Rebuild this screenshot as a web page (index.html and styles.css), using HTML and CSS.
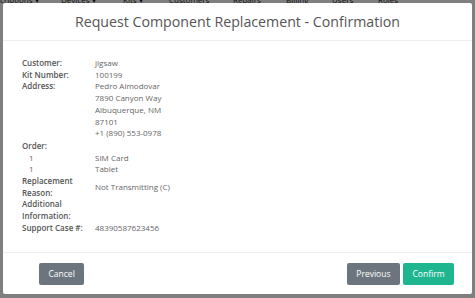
FILE: index.html
```html
<!DOCTYPE html>
<html lang="en">
<head>
    <meta charset="UTF-8">
    <meta name="viewport" content="width=device-width, initial-scale=1.0">
    <title>Request Component Replacement</title>
    <link rel="stylesheet" href="styles.css">
</head>
<body>
    <nav class="topnav">
        <span class="nav-item first">Descriptions &#9662;</span>
        <span class="nav-item">Devices &#9662;</span>
        <span class="nav-item">Kits &#9662;</span>
        <span class="nav-item">Customers</span>
        <span class="nav-item">Repairs</span>
        <span class="nav-item">Billing</span>
        <span class="nav-item">Users</span>
        <span class="nav-item">Roles</span>
    </nav>
    <div class="backdrop"></div>
    <div class="modal">
        <header class="modal-header">
            <h1>Request Component Replacement - Confirmation</h1>
        </header>
        <section class="modal-body">
            <div class="details">
                <div class="label">Customer:</div>
                <div class="value">jigsaw</div>

                <div class="label">Kit Number:</div>
                <div class="value">100199</div>

                <div class="label top">Address:</div>
                <div class="value">
                    Pedro Almodovar<br>
                    7890 Canyon Way<br>
                    Albuquerque, NM<br>
                    87101<br>
                    +1 (890) 553-0978
                </div>

                <div class="label full">Order:</div>

                <div class="qty">1</div>
                <div class="value">SIM Card</div>
                <div class="qty">1</div>
                <div class="value">Tablet</div>

                <div class="label">Replacement Reason:</div>
                <div class="value">Not Transmitting (C)</div>

                <div class="label">Additional Information:</div>
                <div class="value"></div>

                <div class="label">Support Case #:</div>
                <div class="value">48390587623456</div>
            </div>
        </section>
        <footer class="modal-footer">
            <button class="btn btn-secondary">Cancel</button>
            <div class="right-buttons">
                <button class="btn btn-secondary">Previous</button>
                <button class="btn btn-success">Confirm</button>
            </div>
        </footer>
    </div>
</body>
</html>
```

FILE: styles.css
```css
body {
    margin: 0;
    padding: 0;
    font-family: "Open Sans", sans-serif;
    background-color: #fff;
    height: 298px;
    overflow: hidden;
}

.topnav {
    display: flex;
    margin-top: -6px;
    margin-left: -14px;
    font-size: 8px;
    color: #222;
    height: 12px;
    line-height: 12px;
}

.nav-item {
    white-space: nowrap;
    width: 50px;
}

.nav-item.first {
    width: 75px;
}

.nav-item:nth-child(2) {
    width: 62px;
}

.nav-item:nth-child(3) {
    width: 46px;
}

.nav-item:nth-child(4) {
    width: 64px;
}

.nav-item:nth-child(5) {
    width: 53px;
}

.nav-item:nth-child(6),
.nav-item:nth-child(7) {
    width: 46px;
}

.backdrop {
    position: fixed;
    top: 0;
    left: 0;
    right: 0;
    bottom: 0;
    background-color: rgba(0, 0, 0, 0.5);
}

.modal {
    position: fixed;
    top: 3px;
    left: 3px;
    right: 3px;
    bottom: 4px;
    background-color: #fff;
    display: flex;
    flex-direction: column;
    border-radius: 2px;
}

.modal-header {
    height: 37px;
    border-bottom: 1px solid #eee;
    display: flex;
    align-items: center;
    justify-content: center;
}

.modal-header h1 {
    margin: 0;
    font-size: 14.2px;
    font-weight: normal;
    color: #555;
}

.modal-body {
    flex: 1;
    padding: 16px 19px 0 19px;
}

.details {
    display: grid;
    grid-template-columns: 73px 1fr;
    align-items: center;
    font-size: 8px;
    line-height: 11.7px;
    color: #666;
}

.label {
    font-weight: 600;
    color: #555;
    padding-right: 10px;
}

.label.top {
    align-self: start;
}

.label.full {
    grid-column: 1 / span 2;
    margin-top: 1px;
}

.qty {
    padding-left: 7px;
}

.value:empty {
    height: 1px;
}

.modal-footer {
    height: 41px;
    border-top: 1px solid #eee;
    display: flex;
    align-items: center;
    justify-content: space-between;
    padding: 0 18px 0 36px;
}

.right-buttons {
    display: flex;
    gap: 3px;
}

.btn {
    font-family: "Open Sans", sans-serif;
    font-size: 8.5px;
    color: #fff;
    border: none;
    border-radius: 2px;
    height: 22px;
    padding: 0 9.5px;
    cursor: pointer;
}

.btn-secondary {
    background-color: #6c757d;
}

.btn-success {
    background-color: #1fb68f;
}
```
